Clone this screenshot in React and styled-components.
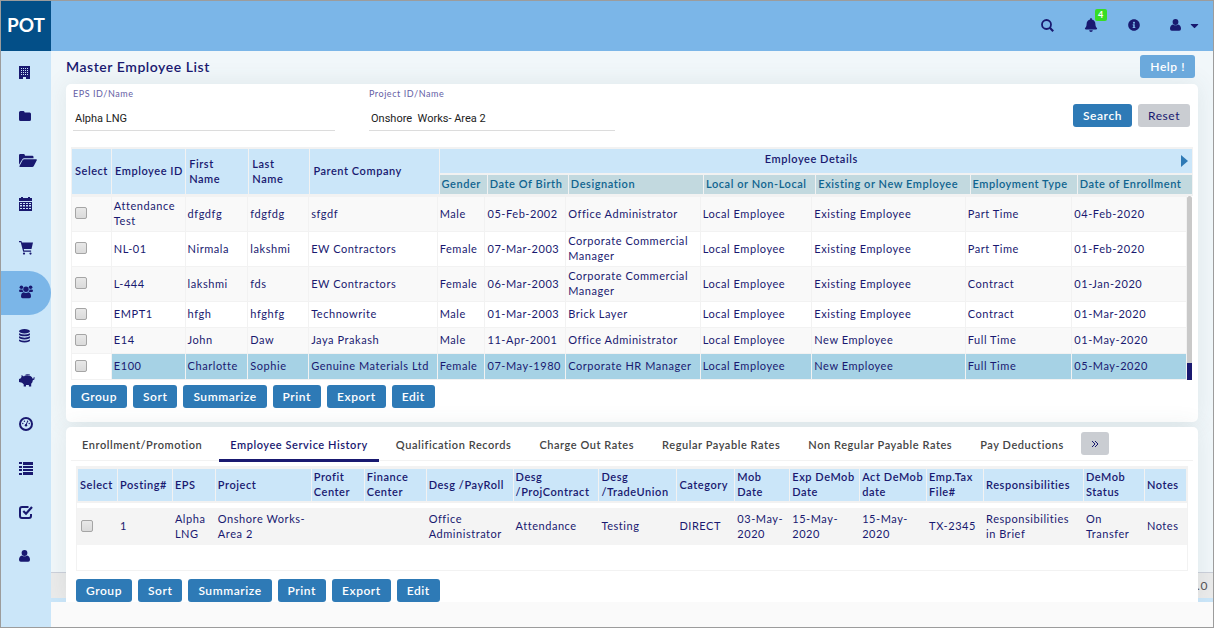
import React from 'react';
import styled, { createGlobalStyle, css } from 'styled-components';
import { FaBell, FaInfoCircle, FaCaretDown } from 'react-icons/fa';

const navy = '#191970';
const sky = '#cbe6f9';
const line = '#f2f2f2';

const GlobalStyle = createGlobalStyle`
  *, *::before, *::after { box-sizing: border-box; }
  body {
    margin: 0;
    background: #fafafa;
    color: ${navy};
    font: 11px/15px Lato, "Liberation Sans", sans-serif;
    letter-spacing: 0.05em;
  }
  button, input { font: inherit; letter-spacing: inherit; color: inherit; margin: 0; }
`;

const Page = styled.div`
  display: grid;
  grid-template: 50px 1fr / 50px 1fr;
  min-height: 100vh;
  border: 1px solid #9c9c9c;
`;

const Logo = styled.a`
  display: flex;
  align-items: center;
  justify-content: center;
  padding-bottom: 4px;
  background: #034f88;
  color: #fff;
  font-size: 19px;
  font-weight: 700;
  letter-spacing: normal;
  text-decoration: none;
`;

const TopBar = styled.header`
  display: flex;
  align-items: center;
  justify-content: flex-end;
  gap: 30px;
  padding: 0 12px 2px 0;
  background: #7bb6e8;
`;

const IconButton = styled.button`
  position: relative;
  display: flex;
  align-items: center;
  gap: 7px;
  padding: 0;
  border: 0;
  background: none;
  font-size: 13px;
`;

const Badge = styled.span`
  position: absolute;
  top: -9px;
  right: -9px;
  width: 12px;
  border-radius: 2px;
  background: #37dd24;
  color: #fff;
  font-size: 9px;
  line-height: 12px;
  font-weight: 700;
  text-align: center;
`;

const Sidebar = styled.nav`
  background: ${sky};
`;

const NavLink = styled.a`
  display: flex;
  align-items: center;
  height: 44px;
  padding: 0 0 2px 18px;
  border-radius: 0 22px 22px 0;
  color: ${navy};
  ${(p) => p.$active && css`background: #7bb6e8;`}
`;

const Main = styled.main`
  min-width: 0;
  background: #fafafa;
`;

const Content = styled.div`
  position: relative;
  z-index: 0;
  padding: 0 15px;
  overflow: hidden;
  background: #f1f7fa;
`;

const Footer = styled.footer`
  position: absolute;
  z-index: -1;
  left: 0;
  right: 0;
  bottom: 0;
  height: 30px;
  padding: 5px 5px 0 0;
  border-top: 1px solid #ccd0da;
  border-bottom: 4px solid ${sky};
  background: #ebebeb;
  color: #555;
  font-size: 12px;
  text-align: right;
`;

const TitleRow = styled.div`
  display: flex;
  align-items: center;
  justify-content: space-between;
  height: 33px;
  padding: 0 3px 2px 0;
`;

const Title = styled.h1`
  margin: 0;
  padding-bottom: 1px;
  font-size: 14px;
  font-weight: 600;
  letter-spacing: inherit;
`;

const Button = styled.button`
  height: 23px;
  padding: 0 10px;
  border: 0;
  border-radius: 3px;
  background: #2e7ab6;
  color: #fff;
  font-size: 12px;
  font-weight: 600;
  ${(p) => p.$tone === 'soft' && css`background: #6ba9dc;`}
  ${(p) => p.$tone === 'muted' && css`
    background: #cacdd2;
    color: ${navy};
    font-weight: 400;
  `}
`;

const Actions = styled.div`
  display: flex;
  gap: 6px;
`;

const Card = styled.section`
  padding: 0 5px;
  border-radius: 5px;
  background: #fff;
  box-shadow: 0 0 24px rgba(60, 90, 90, 0.1);
`;

const ListCard = styled(Card)`
  margin-bottom: 5px;
  padding-bottom: 14px;
`;

const DetailCard = styled(Card)`
  border-radius: 5px 5px 0 0;
`;

const Filters = styled.form`
  display: flex;
  gap: 34px;
  height: 63px;
  padding: 3px 3px 0 2px;
`;

const Field = styled.label`
  flex: 0 0 ${(p) => p.$width};
  color: #6560a5;
  font-size: 9px;
  line-height: 14px;
`;

const TextInput = styled.input`
  display: block;
  width: 100%;
  height: 30px;
  padding: 5px 2px 0;
  border: 0;
  border-bottom: 1px solid #dcdcdc;
  background: none;
  color: #222;
  font: 11px Roboto, sans-serif;
  letter-spacing: normal;
`;

const FilterActions = styled(Actions)`
  margin-left: auto;
  padding-top: 17px;
`;

const Table = styled.table`
  width: 100%;
  border-collapse: collapse;
  table-layout: fixed;
`;

const Th = styled.th`
  height: ${(p) => p.$height};
  padding: 0 0 2px 3px;
  border: 2px solid ${line};
  border-width: 2px 1px;
  background: ${sky};
  font-weight: 600;
  text-align: left;
  white-space: pre-line;
  ${(p) => p.$sub && css`
    padding-left: 2px;
    background: #c2d9df;
    color: #10648f;
    white-space: nowrap;
  `}
`;

const GroupTh = styled(Th)`
  padding: 0;
`;

const GroupTitle = styled.div`
  display: flex;
  align-items: center;
  justify-content: center;
  padding: 0 4px 0 2px;
`;

const GroupName = styled.span`
  flex: 1;
  padding-bottom: 5px;
  text-align: center;
`;

const Td = styled.td`
  height: 26px;
  padding: 1px 2px 3px;
  border: 1px solid ${line};
`;

const Row = styled.tr`
  &:nth-child(odd) { background: #f9f9f9; }
  ${(p) => p.$selected && css`
    && { background: #fff; }
    td + td { background: #a6d2e5; }
  `}
`;

const BodyPane = styled.div`
  display: flex;
  margin-bottom: 5px;
`;

const ScrollTrack = styled.div`
  display: flex;
  align-items: flex-end;
  flex: 0 0 5px;
  margin-right: 1px;
  border-radius: 3px;
  background: #c9c9c9;
`;

const ScrollThumb = styled.div`
  width: 100%;
  height: 17px;
  background: ${navy};
`;

const Check = styled.input`
  appearance: none;
  display: block;
  width: 12px;
  height: 12px;
  margin: 0 0 0 1px;
  border: 1px solid #a5a5a5;
  border-radius: 2px;
  background: linear-gradient(#e8e8e8, #dadada);
`;

const Tabs = styled.div`
  display: flex;
  gap: 6px;
  height: 34px;
  border-bottom: 1px solid ${line};
`;

const Tab = styled.button`
  height: 35px;
  padding: 2px 11px 0;
  border: 0;
  border-bottom: 3px solid ${(p) => (p.$active ? navy : 'transparent')};
  background: none;
  color: ${(p) => (p.$active ? navy : '#444')};
  font-weight: 600;
  white-space: nowrap;
`;

const MoreButton = styled(Button)`
  display: flex;
  align-items: center;
  justify-content: center;
  width: 28px;
  margin-top: 5px;
  padding: 0;
`;

const HistoryPane = styled.div`
  height: 105px;
  margin: 5px 5px 8px;
  border: 1px solid ${line};
`;

const HistoryBody = styled.div`
  margin-top: 5px;
`;

const HistoryTh = styled(Th)`
  padding: 0 0 2px 2px;
`;

const HistoryTd = styled(Td)`
  height: 36px;
  border-color: #f4f4f4;
  background: #f4f4f4;
`;

const DetailActions = styled(Actions)`
  padding-left: 5px;
`;

const Icon = ({ width = 14, height = 14, children, ...rest }) => (
  <svg width={width} height={height} viewBox={`0 0 ${width} ${height}`} fill="currentColor" aria-hidden="true" {...rest}>
    {children}
  </svg>
);

const BuildingIcon = () => (
  <Icon width={11} height={13}>
    <path d="M0 0h11v13H7v-2H4v2H0z" />
    <path d="M2 2h1v1H2zM4 2h1v1H4zM6 2h1v1H6zM8 2h1v1H8zM2 4h1v1H2zM4 4h1v1H4zM6 4h1v1H6zM8 4h1v1H8zM2 6h1v1H2zM4 6h1v1H4zM6 6h1v1H6zM8 6h1v1H8zM2 8h1v1H2zM4 8h1v1H4zM6 8h1v1H6zM8 8h1v1H8z" fill={sky} />
  </Icon>
);

const FolderIcon = () => (
  <Icon width={12} height={10}>
    <path d="M1.500 0h3Q5.500 0 5.700 1.500h5Q12 1.500 12 3v5.500Q12 10 10.500 10h-9Q0 10 0 8.500v-7Q0 0 1.500 0z" />
  </Icon>
);

const FolderOpenIcon = () => (
  <Icon width={18} height={13}>
    <path d="M1.300 0h3.500Q6 0 6 1.700h7.300Q14.500 1.700 14.500 3v1.200H5.300Q3.900 4.200 3.200 5.400L0 10.700V1.300Q0 0 1.300 0z" />
    <path d="M5.200 5.200h12q1.100 0 .6 1l-3 5.800q-.5 1-1.600 1H1.200q-1.300 0-.7-1l3.200-6q.5-.8 1.500-.8z" />
  </Icon>
);

const CalendarIcon = () => (
  <Icon width={13}>
    <path d="M0 1h2V0h2v1h5V0h2v1h2v3H0z" />
    <path fillRule="evenodd" d="M0 5h13v9H0zM1 6v1h2V6zm3 0v1h2V6zm3 0v1h2V6zm3 0v1h2V6zM1 8v2h2V8zm3 0v2h2V8zm3 0v2h2V8zm3 0v2h2V8zM1 11v1h2v-1zm3 0v1h2v-1zm3 0v1h2v-1zm3 0v1h2v-1z" />
    <path d="M1 9h11v1H1z" opacity=".5" />
  </Icon>
);

const CartIcon = () => (
  <Icon>
    <path d="M0 0h2.400l.5 1.500H14L12.500 8H4.800l.3 1.500h7v1.200H4.200L1.700 1.200H0z" />
    <circle cx="5" cy="12.600" r="1.100" />
    <circle cx="11.500" cy="12.600" r="1.100" />
  </Icon>
);

const UsersIcon = () => (
  <Icon>
    <circle cx="2.400" cy="2.200" r="1.800" />
    <circle cx="11.600" cy="2.200" r="1.800" />
    <circle cx="7" cy="4.300" r="2.700" />
    <path d="M1.500 4.500h2q.2 1.600 1 2.500H1.300Q0 7 0 5.800t1.500-1.300zM12.500 4.500h-2q-.2 1.600-1 2.500h3.200Q14 7 14 5.800t-1.500-1.300zM4.600 7.300q2.400 1.300 4.800 0 2.600.5 2.600 4.200 0 1.700-1.600 1.700H3.600Q2 13.200 2 11.500q0-3.700 2.600-4.200z" />
  </Icon>
);

const DatabaseIcon = () => (
  <Icon width={11}>
    <ellipse cx="5.500" cy="2.300" rx="5.500" ry="2.200" />
    <path d="M0 4.200q5.500 2.800 11 0v1.200q0 1.700-5.500 1.900Q0 7.100 0 5.400zM0 7.300q5.500 2.800 11 0v1.200q0 1.700-5.500 1.900Q0 10.200 0 8.500zM0 10.400q5.500 2.800 11 0v1.200q0 1.700-5.500 1.900Q0 13.300 0 11.600z" />
  </Icon>
);

const PiggyIcon = () => (
  <Icon width={16} height={13}>
    <path d="M2.500 1 5 2.400Q5.500 1.700 6.500 1.500 9 1 11 1.800q2.200 1 2.700 3l.8-.3.300-1.500.8.200-.2 2.200-1.600.8q0 2.200-1.600 3.600V12.500H9.900V11H7v1.500H4.700V10.300L3 8.800 0 8V5l1.500-.6L2.500 3z" />
    <path d="M6.500.6Q8.800-.3 11 .6l-.3.700q-2-.6-4 0z" />
  </Icon>
);

const GaugeIcon = () => (
  <Icon fill="none" stroke="currentColor">
    <circle cx="7" cy="7" r="6" strokeWidth="2" />
    <path d="M7 8 8.500 4.500" strokeWidth="1" />
    <g fill="currentColor" stroke="none">
      <circle cx="3.800" cy="6.500" r=".7" /><circle cx="5.400" cy="4.300" r=".7" />
      <circle cx="10.200" cy="6.500" r=".7" /><circle cx="8.600" cy="4.300" r=".7" />
      <circle cx="7" cy="8.200" r="1.200" />
    </g>
  </Icon>
);

const ListIcon = () => (
  <Icon height={13}>
    <path d="M0 0h3v2H0zM4 0h10v3H4zM0 4h3v2H0zM4 4h10v2H4zM0 7h3v2H0zM4 7h10v2H4zM0 11h3v2H0zM4 10h10v3H4z" />
  </Icon>
);

const TickIcon = () => (
  <Icon fill="none" stroke="currentColor">
    <path d="M9.500 2H3a2 2 0 0 0-2 2v7a2 2 0 0 0 2 2h7a2 2 0 0 0 2-2V9" strokeWidth="2" />
    <path d="m4.300 6 2.700 2.700L13 2" strokeWidth="2.200" />
  </Icon>
);

const UserIcon = () => (
  <Icon width={11} height={12}>
    <circle cx="5.500" cy="3" r="2.900" />
    <path d="M3 5.500q2.500 1.700 5 0 3 .7 3 4.300 0 2-1.800 2H1.800Q0 11.800 0 9.800q0-3.600 3-4.300z" />
  </Icon>
);

const SearchIcon = () => (
  <Icon width={13} height={13} fill="none" stroke="currentColor">
    <circle cx="5.500" cy="5.500" r="4.500" strokeWidth="1.800" />
    <path d="m8.800 8.800 3.400 3.400" strokeWidth="2.200" />
  </Icon>
);

const MoreIcon = () => (
  <Icon width={8} height={8} fill="none" stroke="currentColor">
    <path d="m1 1 3 3-3 3M4 1l3 3-3 3" />
  </Icon>
);

const navItems = [
  ['Buildings', BuildingIcon], ['Projects', FolderIcon], ['Documents', FolderOpenIcon],
  ['Calendar', CalendarIcon], ['Procurement', CartIcon], ['Employees', UsersIcon],
  ['Data', DatabaseIcon], ['Finance', PiggyIcon], ['Dashboard', GaugeIcon],
  ['Lists', ListIcon], ['Tasks', TickIcon], ['Account', UserIcon],
];

const employeeCols = [40, 74, 63, 61, 129, 48, 81, 135, 112, 154, 107, 115];
const employeeHeads = ['Select', 'Employee ID', 'First\nName', 'Last\nName', 'Parent Company'];
const detailHeads = ['Gender', 'Date Of Birth', 'Designation', 'Local or Non-Local', 'Existing or New Employee', 'Employment Type', 'Date of Enrollment'];
const employees = [
  ['Attendance Test', 'dfgdfg', 'fdgfdg', 'sfgdf', 'Male', '05-Feb-2002', 'Office Administrator', 'Local Employee', 'Existing Employee', 'Part Time', '04-Feb-2020'],
  ['NL-01', 'Nirmala', 'lakshmi', 'EW Contractors', 'Female', '07-Mar-2003', 'Corporate Commercial Manager', 'Local Employee', 'Existing Employee', 'Part Time', '01-Feb-2020'],
  ['L-444', 'lakshmi', 'fds', 'EW Contractors', 'Female', '06-Mar-2003', 'Corporate Commercial Manager', 'Local Employee', 'Existing Employee', 'Contract', '01-Jan-2020'],
  ['EMPT1', 'hfgh', 'hfghfg', 'Technowrite', 'Male', '01-Mar-2003', 'Brick Layer', 'Local Employee', 'Existing Employee', 'Contract', '01-Mar-2020'],
  ['E14', 'John', 'Daw', 'Jaya Prakash', 'Male', '11-Apr-2001', 'Office Administrator', 'Local Employee', 'New Employee', 'Full Time', '01-May-2020'],
  ['E100', 'Charlotte', 'Sophie', 'Genuine Materials Ltd', 'Female', '07-May-1980', 'Corporate HR Manager', 'Local Employee', 'New Employee', 'Full Time', '05-May-2020'],
];

const historyCols = [40, 55, 43, 96, 53, 62, 87, 86, 78, 58, 55, 70, 67, 57, 100, 61, 42];
const historyHeads = ['Select', 'Posting#', 'EPS', 'Project', 'Profit Center', 'Finance Center', 'Desg /PayRoll', 'Desg /ProjContract', 'Desg /TradeUnion', 'Category', 'Mob Date', 'Exp DeMob Date', 'Act DeMob date', 'Emp.Tax File#', 'Responsibilities', 'DeMob Status', 'Notes'];
const history = ['1', 'Alpha LNG', 'Onshore Works- Area 2', '', '', 'Office Administrator', 'Attendance', 'Testing', 'DIRECT', '03-May-2020', '15-May-2020', '15-May-2020', 'TX-2345', 'Responsibilities in Brief', 'On Transfer', 'Notes'];

const tabs = ['Enrollment/Promotion', 'Employee Service History', 'Qualification Records', 'Charge Out Rates', 'Regular Payable Rates', 'Non Regular Payable Rates', 'Pay Deductions'];
const actions = ['Group', 'Sort', 'Summarize', 'Print', 'Export', 'Edit'];

const Col = styled.col`
  width: ${(p) => p.$share}%;
`;

const Columns = ({ weights }) => {
  const total = weights.reduce((a, b) => a + b, 0);
  return (
    <colgroup>
      {weights.map((w, i) => <Col key={i} $share={(w / total) * 100} />)}
    </colgroup>
  );
};

const ActionButtons = () => actions.map((a) => <Button key={a} type="button">{a}</Button>);

export default function App() {
  return (
    <>
      <GlobalStyle />
      <Page>
        <Logo href="#home">POT</Logo>
        <TopBar>
          <IconButton aria-label="Search"><SearchIcon /></IconButton>
          <IconButton aria-label="Notifications"><FaBell size={14} /><Badge>4</Badge></IconButton>
          <IconButton aria-label="Information"><FaInfoCircle size={12} /></IconButton>
          <IconButton aria-label="Account"><UserIcon /><FaCaretDown /></IconButton>
        </TopBar>
        <Sidebar>
          {navItems.map(([name, NavIcon]) => (
            <NavLink key={name} href={`#${name.toLowerCase()}`} aria-label={name} $active={name === 'Employees'}>
              <NavIcon />
            </NavLink>
          ))}
        </Sidebar>
        <Main>
          <Content>
            <TitleRow>
              <Title>Master Employee List</Title>
              <Button type="button" $tone="soft">Help !</Button>
            </TitleRow>
            <ListCard>
              <Filters>
                <Field $width="262px">EPS ID/Name<TextInput defaultValue="Alpha LNG" /></Field>
                <Field $width="246px">Project ID/Name<TextInput defaultValue="Onshore  Works- Area 2" /></Field>
                <FilterActions>
                  <Button type="button">Search</Button>
                  <Button type="reset" $tone="muted">Reset</Button>
                </FilterActions>
              </Filters>
              <Table>
                <Columns weights={employeeCols} />
                <thead>
                  <tr>
                    {employeeHeads.map((h) => <Th key={h} rowSpan={2}>{h}</Th>)}
                    <GroupTh colSpan={7} $height="26px">
                      <GroupTitle>
                        <GroupName>Employee Details</GroupName>
                        <svg width="7" height="12" viewBox="0 0 7 12" fill="#2e7ab6" aria-hidden="true"><path d="M0 0 7 6 0 12z" /></svg>
                      </GroupTitle>
                    </GroupTh>
                  </tr>
                  <tr>{detailHeads.map((h) => <Th key={h} $sub $height="21px">{h}</Th>)}</tr>
                </thead>
              </Table>
              <BodyPane>
                <Table>
                  <Columns weights={employeeCols} />
                  <tbody>
                    {employees.map((r) => (
                      <Row key={r[0]} $selected={r[0] === 'E100'}>
                        <Td><Check type="checkbox" aria-label={`Select ${r[0]}`} /></Td>
                        {r.map((c, i) => <Td key={i}>{c}</Td>)}
                      </Row>
                    ))}
                  </tbody>
                </Table>
                <ScrollTrack><ScrollThumb /></ScrollTrack>
              </BodyPane>
              <Actions><ActionButtons /></Actions>
            </ListCard>
            <DetailCard>
              <Tabs role="tablist">
                {tabs.map((t, i) => <Tab key={t} type="button" role="tab" aria-selected={i === 1} $active={i === 1}>{t}</Tab>)}
                <MoreButton type="button" $tone="muted" aria-label="More tabs"><MoreIcon /></MoreButton>
              </Tabs>
              <HistoryPane>
                <Table>
                  <Columns weights={historyCols} />
                  <thead><tr>{historyHeads.map((h) => <HistoryTh key={h} $height="34px">{h}</HistoryTh>)}</tr></thead>
                </Table>
                <HistoryBody>
                  <Table>
                    <Columns weights={historyCols} />
                    <tbody>
                      <tr>
                        <HistoryTd><Check type="checkbox" aria-label="Select posting 1" /></HistoryTd>
                        {history.map((c, i) => <HistoryTd key={i}>{c}</HistoryTd>)}
                      </tr>
                    </tbody>
                  </Table>
                </HistoryBody>
              </HistoryPane>
              <DetailActions><ActionButtons /></DetailActions>
            </DetailCard>
            <Footer>Version 1.0</Footer>
          </Content>
        </Main>
      </Page>
    </>
  );
}
